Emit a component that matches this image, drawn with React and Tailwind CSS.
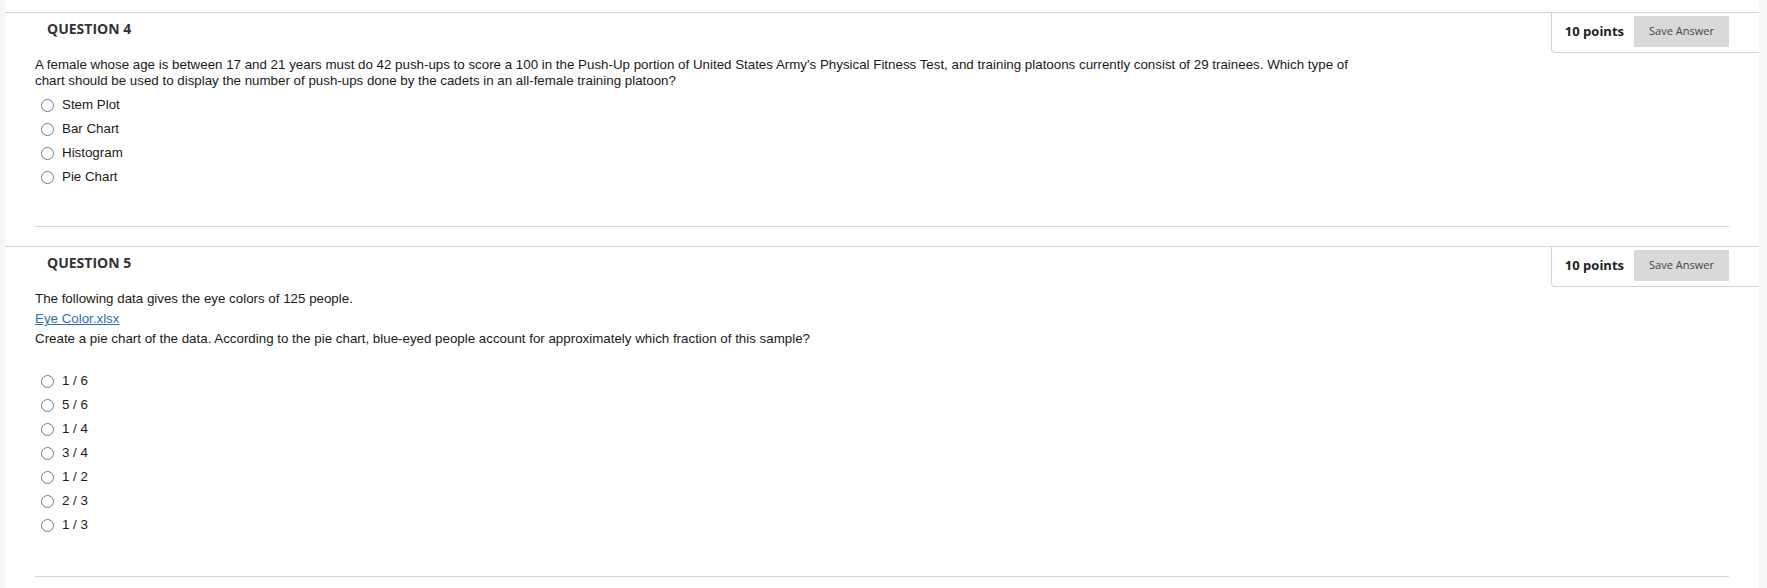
import React from "react";

const q4Options = ["Stem Plot", "Bar Chart", "Histogram", "Pie Chart"];
const q5Options = ["1 / 6", "5 / 6", "1 / 4", "3 / 4", "1 / 2", "2 / 3", "1 / 3"];

const Radio = ({ label }) => (
  <label className="flex h-[24px] items-center pl-[6px]">
    <span className="h-[13px] w-[13px] shrink-0 rounded-full border border-[#7a7a7a] bg-white" />
    <span className="ml-[8px] text-[13.33px] text-[#1a1a1a]">{label}</span>
  </label>
);

const PointsBox = () => (
  <div className="flex items-center rounded-bl-[4px] border-b border-l border-[#d4d4d4] pb-[5px] pl-[13px] pr-[30px] pt-[3px] font-['Open_Sans',sans-serif]">
    <span className="text-[13px] font-bold text-[#222]">10 points</span>
    <button className="ml-[10px] h-[31px] w-[95px] bg-[#d9d9d9] text-[11px] text-[#444]">
      Save Answer
    </button>
  </div>
);

const Header = ({ title }) => (
  <div className="flex items-start justify-between">
    <h3 className="pl-[42px] pt-[6px] font-['Open_Sans',sans-serif] text-[14px] font-bold leading-[19px] text-[#333]">
      {title}
    </h3>
    <PointsBox />
  </div>
);

export default function App() {
  return (
    <div className="flex min-h-[588px] w-full bg-white font-['Liberation_Sans',Arial,sans-serif]">
      <div className="w-[5px] shrink-0 bg-[#f7f7f7]" />
      <div className="flex-1 pt-[12px]">
        <section className="border-t border-[#d4d4d4]">
          <Header title="QUESTION 4" />
          <div className="px-[30px]">
            <div className="border-b border-[#d4d4d4] pb-[37px]">
              <p className="mt-[4px] whitespace-nowrap text-[13.33px] leading-[16px] text-[#1a1a1a]">
                A female whose age is between 17 and 21 years must do 42 push-ups to score a 100 in the Push-Up portion of United States Army's Physical Fitness Test, and training platoons currently consist of 29 trainees. Which type of
                <br />
                chart should be used to display the number of push-ups done by the cadets in an all-female training platoon?
              </p>
              <div className="mt-[4px] flex flex-col">
                {q4Options.map((o) => (
                  <Radio key={o} label={o} />
                ))}
              </div>
            </div>
          </div>
        </section>

        <section className="mt-[19px] border-t border-[#d4d4d4]">
          <Header title="QUESTION 5" />
          <div className="px-[30px]">
            <div className="border-b border-[#d4d4d4] pb-[39px]">
              <div className="mt-[2px] text-[13.33px] leading-[20px] text-[#1a1a1a]">
                <p>The following data gives the eye colors of 125 people.</p>
                <p>
                  <a href="#" className="text-[#2f6fb3] underline">Eye Color.xlsx</a>
                </p>
                <p>Create a pie chart of the data. According to the pie chart, blue-eyed people account for approximately which fraction of this sample?</p>
              </div>
              <div className="mt-[20px] flex flex-col">
                {q5Options.map((o) => (
                  <Radio key={o} label={o} />
                ))}
              </div>
            </div>
          </div>
        </section>
      </div>
      <div className="w-[8px] shrink-0 bg-[#f7f7f7]" />
    </div>
  );
}
